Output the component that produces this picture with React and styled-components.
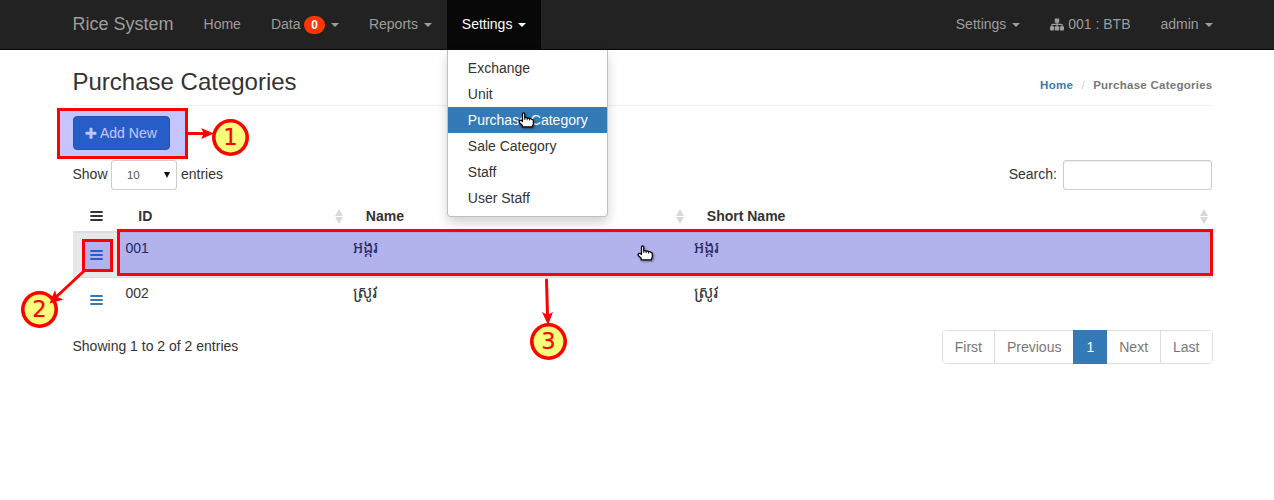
import React from "react";
import styled, { createGlobalStyle } from "styled-components";

const Global = createGlobalStyle`
  * { box-sizing: border-box; }
  body { margin: 0; background: #fff; overflow: hidden; }
  #root { font: 14px/20px "Liberation Sans", Arial, "Noto Sans Khmer", sans-serif; color: #333; }
`;

const Page = styled.div`position: relative; width: 1274px; height: 500px; overflow: hidden; background: #fff;`;
const Container = styled.div`width: 1140px; margin-left: 72.5px;`;

const Navbar = styled.nav`height: 50px; background: #222; border-bottom: 1px solid #080808;`;
const NavInner = styled(Container)`display: flex; height: 49px;`;
const Brand = styled.a`font-size: 18px; padding: 14px 15px 15px 0; color: #9d9d9d; white-space: nowrap;`;
const NavLink = styled.a`
  display: flex; align-items: center; height: 49px; padding: 0 15px 1px; white-space: nowrap; position: relative;
  color: ${(p) => (p.$active ? "#fff" : "#9d9d9d")};
  background: ${(p) => (p.$active ? "#080808" : "transparent")};
`;
const NavRight = styled.div`display: flex; margin-left: auto; margin-right: -15px;`;
const Caret = styled.span`
  margin-left: 5.87px; margin-top: 2px; border: 4px solid transparent; border-top-color: currentColor; border-bottom: 0;
`;
const Count = styled.span`
  margin: 2px 0 0 3.9px; min-width: 20.7px; height: 18px; padding: 3px 7px; border-radius: 10px; background: #ff3502; color: #fff;
  font: bold 12px/12px "Liberation Sans", sans-serif;
`;
const Menu = styled.div`
  position: absolute; z-index: 5; left: 0; top: 50px; width: 161.5px; height: 167px; padding: 5px 0;
  background: #fff; color: #333; border: 1px solid rgba(0,0,0,.25); border-top: 0;
  border-radius: 0 0 4px 4px; box-shadow: 0 6px 12px rgba(0,0,0,.175);
`;
const MenuItem = styled.a`
  display: block; padding: 3px 20px; color: ${(p) => (p.$active ? "#fff" : "#333")};
  background: ${(p) => (p.$active ? "#337ab7" : "transparent")};
`;

const Header = styled.header`
  display: flex; justify-content: space-between; height: 56px; border-bottom: 1px solid #eee;
`;
const Title = styled.h3`margin: 0; padding-top: 19px; font-weight: 400; font-size: 24px; line-height: 26px;`;
const Crumbs = styled.div`
  display: flex; padding-top: 26px; font-size: 11.5px; font-weight: 700; line-height: 18px; color: #777;
  letter-spacing: .26px;
`;
const CrumbLink = styled.a`color: #337ab7;`;
const Slash = styled.span`color: #ccc; font-weight: 400; padding: 0 8.3px;`;

const Actions = styled.div`padding-top: 10px; height: 54px;`;
const Button = styled.button`
  display: flex; align-items: center; height: 34px; width: 97.4px; padding: 0 11.5px; gap: 3px; border: 1px solid #2e6da4; border-radius: 4px;
  background: #337ab7; color: #fff; font: inherit; white-space: nowrap;
`;
const Controls = styled.div`display: flex; align-items: flex-start; justify-content: space-between; height: 39px;`;
const Label = styled.label`display: flex; align-items: center; height: 30px; padding-bottom: 2px;`;
const Select = styled.span`
  display: flex; justify-content: space-between; align-items: center; width: 66px; height: 30px; margin: 2px 4px 0 3.4px;
  padding: 0 6px 0 15px; border: 1px solid #ccc; border-radius: 3px; color: #555; font-size: 11.5px;
`;
const SelectArrow = styled.span`border: 3.5px solid transparent; border-top: 6px solid #111; border-bottom: 0;`;
const Input = styled.input`
  width: 149px; height: 30px; margin: 2px .6px 0 6px; border: 1px solid #ccc; border-radius: 3px; background: #fff;
  box-shadow: inset 0 1px 1px rgba(0,0,0,.075);
`;

const Row = styled.div`
  display: grid; grid-template-columns: 45px 227.5px 341px 526.5px; height: ${(p) => (p.$hover ? 44 : 45)}px;
  background: ${(p) => (p.$hover ? "#e8e8e8" : "#fff")};
  border-top: ${(p) => (p.$hover ? "0" : "1px solid #ddd")};
`;
const HeadRow = styled(Row)`height: 34px; border-top: 0; border-bottom: 2px solid #ddd;`;
const Th = styled.div`
  display: flex; align-items: center; justify-content: space-between; font-weight: 700;
  padding: 2px ${(p) => (p.$last ? 5 : 2.5)}px 0 20.8px;
`;
const Td = styled.div`padding: 5px 8px; font-size: ${(p) => (p.$khmer ? 16 : 14)}px;`;
const IconCell = styled.div`
  display: flex; justify-content: center; padding: ${(p) => p.$top}px 0 0 3px; color: ${(p) => p.$color || "#337ab7"};
`;
const Footer = styled.div`display: flex; justify-content: space-between; padding-top: 8px;`;
const Info = styled.div`padding-top: 6px;`;
const Pages = styled.div`display: flex; border: 1px solid #ddd; border-radius: 4px; height: 34px;`;
const PageLink = styled.a`
  padding: 6px 12px; color: ${(p) => (p.$active ? "#fff" : "#777")};
  background: ${(p) => (p.$active ? "#337ab7" : "#fff")};
  margin: ${(p) => (p.$active ? "-1px 0" : "0")};
  padding-top: ${(p) => (p.$active ? "7px" : "6px")};
  border-left: ${(p) => (p.$line ? "1px solid #ddd" : "0")};
  border-radius: ${(p) => (p.$active || p.$line ? "0" : "3px")};
  ${(p) => p.$active && "padding-left: 13px; padding-right: 13px;"}
`;

const Highlight = styled.div`
  position: absolute; left: ${(p) => p.$x}px; top: ${(p) => p.$y}px; width: ${(p) => p.$w}px; height: ${(p) => p.$h}px;
  border: 3px solid #f00; background: rgba(0,0,255,.23); background-clip: padding-box;
`;
const Marker = styled.div`
  position: absolute; left: ${(p) => p.$x}px; top: ${(p) => p.$y}px; width: 37px; height: 37px; border-radius: 50%;
  box-shadow: inset 0 0 0 3.6px #f00; background: #f8ff7b; color: #f00; text-align: center;
  font: 22.5px/37px "DejaVu Sans", sans-serif; text-shadow: 0 0 1px rgba(255,100,0,.5);
`;
const Arrows = styled.svg`position: absolute; left: 0; top: 0; pointer-events: none;`;
const CursorSvg = styled.svg`
  position: absolute; z-index: 8; left: ${(p) => p.$x}px; top: ${(p) => p.$y}px;
  filter: drop-shadow(1px 1px 1px rgba(0,0,0,.45));
`;

const Bars = () => (
  <svg width="13" height="12" viewBox="0 0 13 12" fill="currentColor">
    <rect x=".3" y="1" width="12.4" height="2" rx=".3" />
    <rect x=".3" y="5.1" width="12.4" height="1.9" rx=".3" />
    <rect x=".3" y="9.1" width="12.4" height="1.9" rx=".3" />
  </svg>
);
const Plus = () => (
  <svg width="12" height="13" viewBox="130 90 1540 1540" fill="currentColor">
    <path d="M1600 736v192q0 40-28 68t-68 28h-416v416q0 40-28 68t-68 28h-192q-40 0-68-28t-28-68v-416h-416q-40 0-68-28t-28-68v-192q0-40 28-68t68-28h416v-416q0-40 28-68t68-28h192q40 0 68 28t28 68v416h416q40 0 68 28t28 68z" />
  </svg>
);
const SitemapSvg = styled.svg`margin-right: 4px;`;
const Sitemap = () => (
  <SitemapSvg width="14" height="13" viewBox="0 0 14 13" fill="currentColor">
    <rect x="4.8" y="0.5" width="4.4" height="4.2" rx=".6" />
    <rect x="0" y="8.2" width="4.2" height="4.2" rx=".6" />
    <rect x="4.9" y="8.2" width="4.2" height="4.2" rx=".6" />
    <rect x="9.8" y="8.2" width="4.2" height="4.2" rx=".6" />
    <path d="M6.4 4h1.2v1.8H11.6q1.100 0 1.100 1.100v2h-1.200V7H7.600v2h-1.200V7H2.500v2H1.300V6.900q0-1.100 1.100-1.100h4z" />
  </SitemapSvg>
);
const Sort = () => (
  <svg width="8" height="15" viewBox="0 0 8 15" fill="#d9d9d9">
    <path d="M4 0L8 7H0zM0 8h8L4 15z" />
  </svg>
);
const Hand = ({ x, y }) => (
  <CursorSvg $x={x} $y={y} width="17" height="17" viewBox="0 0 17 17">
    <path
      d="M4.500 9.500V2.200q0-1.400 1-1.400t1.200 1.400V5.800q2-.7 2.500.5 1.800-.6 2.300.5 1.600-.5 2.200.5 1.600 0 1.600 1.600v3.400l-.8 1.300v1.300H4.200V13.300L1.200 10.500V9q1.400-1.300 3.300.5z"
      fill="#fff" stroke="#000" strokeWidth="1.200" strokeLinejoin="round"
    />
    <path d="M6.800 5.600v2.400M9.200 6.200v2M11.500 6.800v1.700" stroke="#000" strokeWidth=".9" />
  </CursorSvg>
);

const menu = ["Exchange", "Unit", "Purchase Category", "Sale Category", "Staff", "User Staff"];
const rows = [["001", "អង្ករ", "អង្ករ"], ["002", "ស្រូវ", "ស្រូវ"]];

export default function App() {
  return (
    <Page>
      <Global />
      <Navbar>
        <NavInner>
          <Brand>Rice System</Brand>
          <NavLink>Home</NavLink>
          <NavLink>Data<Count>0</Count><Caret /></NavLink>
          <NavLink>Reports<Caret /></NavLink>
          <NavLink $active>
            Settings<Caret />
            <Menu>
              {menu.map((m) => <MenuItem key={m} $active={m === "Purchase Category"}>{m}</MenuItem>)}
            </Menu>
          </NavLink>
          <NavRight>
            <NavLink>Settings<Caret /></NavLink>
            <NavLink><Sitemap />001 : BTB</NavLink>
            <NavLink>admin<Caret /></NavLink>
          </NavRight>
        </NavInner>
      </Navbar>
      <Container>
        <Header>
          <Title>Purchase Categories</Title>
          <Crumbs><CrumbLink>Home</CrumbLink><Slash>/</Slash>Purchase Categories</Crumbs>
        </Header>
        <Actions><Button><Plus />Add New</Button></Actions>
        <Controls>
          <Label>Show<Select>10<SelectArrow /></Select>entries</Label>
          <Label>Search:<Input /></Label>
        </Controls>
        <HeadRow>
          <IconCell $top={11} $color="#333"><Bars /></IconCell>
          <Th>ID<Sort /></Th>
          <Th>Name<Sort /></Th>
          <Th $last>Short Name<Sort /></Th>
        </HeadRow>
        {rows.map((r, i) => (
          <Row key={r[0]} $hover={i === 0}>
            <IconCell $top={16}><Bars /></IconCell>
            {r.map((c, j) => <Td key={j} $khmer={j > 0}>{c}</Td>)}
          </Row>
        ))}
        <Footer>
          <Info>Showing 1 to 2 of 2 entries</Info>
          <Pages>
            <PageLink>First</PageLink>
            <PageLink $line>Previous</PageLink>
            <PageLink $active>1</PageLink>
            <PageLink>Next</PageLink>
            <PageLink $line>Last</PageLink>
          </Pages>
        </Footer>
      </Container>
      <Highlight $x={57} $y={108} $w={131} $h={51} />
      <Highlight $x={82} $y={239} $w={31} $h={33} />
      <Highlight $x={117} $y={229} $w={1096} $h={47} />
      <Marker $x={212} $y={119}>1</Marker>
      <Marker $x={21} $y={291}>2</Marker>
      <Marker $x={530} $y={323}>3</Marker>
      <Arrows width="1274" height="500" fill="#f00">
        <path d="M187 133.5H206M84 271L54 299M546.5 280L547.5 316" stroke="#f00" strokeWidth="3" strokeLinecap="round" />
        <path d="M214 133.500L201 128l3 5.500-3 5.500z" />
        <path d="M49.500 303.500L63.500 299.500L57 297L55 290z" />
        <path d="M548 325L542 312l5.500 3 5.500-3z" />
      </Arrows>
      <Hand x={518} y={112} />
      <Hand x={637} y={245} />
    </Page>
  );
}
